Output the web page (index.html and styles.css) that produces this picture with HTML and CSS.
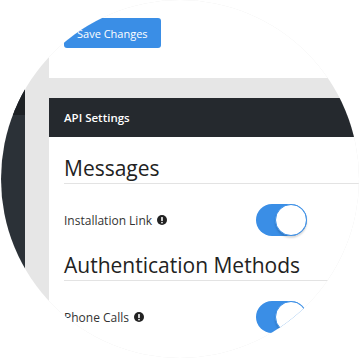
FILE: index.html
```html
<!DOCTYPE html>
<html lang="en">
<head>
  <meta charset="UTF-8">
  <meta name="viewport" content="width=device-width, initial-scale=1.0">
  <title>API Settings</title>
  <link rel="stylesheet" href="styles.css">
</head>
<body>

  <div class="lens">
    <div class="app">
      <aside class="sidebar">
        <div class="sidebar-brand"></div>
      </aside>

      <main class="main">
        <div class="topbar">
          <button class="btn-save">Save Changes</button>
        </div>

        <section class="card">
          <div class="card-header">API Settings</div>
          <div class="card-body">
            <h2 class="section-title">Messages</h2>
            <div class="setting-row">
              <span class="setting-label">Installation Link
                <svg class="info-icon" viewBox="0 0 10 10"><circle cx="5" cy="5" r="5" fill="#222"/><rect x="4.2" y="2" width="1.6" height="4" rx="0.6" fill="#fff"/><circle cx="5" cy="7.6" r="0.85" fill="#fff"/></svg>
              </span>
              <span class="toggle on"><span class="knob"></span></span>
            </div>

            <h2 class="section-title">Authentication Methods</h2>
            <div class="setting-row">
              <span class="setting-label">Phone Calls
                <svg class="info-icon" viewBox="0 0 10 10"><circle cx="5" cy="5" r="5" fill="#222"/><rect x="4.2" y="2" width="1.6" height="4" rx="0.6" fill="#fff"/><circle cx="5" cy="7.6" r="0.85" fill="#fff"/></svg>
              </span>
              <span class="toggle on"><span class="knob"></span></span>
            </div>
          </div>
        </section>
      </main>
    </div>
  </div>

</body>
</html>
```

FILE: styles.css
```css
body {
  margin: 0;
  background-color: #fff;
  font-family: 'Open Sans', sans-serif;
}

.lens {
  width: 359px;
  height: 359px;
  overflow: hidden;
  clip-path: circle(179px at 180px 179px);
}

.app {
  display: flex;
  height: 100%;
}

.sidebar {
  width: 25px;
  background-color: #2b3137;
}

.sidebar-brand {
  height: 115px;
  background-color: #1d2125;
}

.main {
  flex: 1;
  background-color: #e6e6e6;
  padding-left: 24px;
}

.topbar {
  height: 78px;
  background-color: #fff;
  padding: 18px 15px 0;
  box-sizing: border-box;
  margin-bottom: 20px;
}

.btn-save {
  height: 30px;
  padding: 0 13px;
  background-color: #3a8ee6;
  color: #fff;
  border: none;
  border-radius: 3px;
  font-family: 'Open Sans', sans-serif;
  font-size: 11px;
}

.card {
  background-color: #fff;
}

.card-header {
  height: 39px;
  line-height: 39px;
  padding-left: 15px;
  background-color: #25292e;
  color: #fff;
  font-size: 11.5px;
  font-weight: 600;
}

.card-body {
  padding: 19px 0 40px 15px;
}

.section-title {
  margin: 0;
  padding-bottom: 2px;
  font-size: 21px;
  line-height: 25px;
  font-weight: 400;
  color: #222;
  border-bottom: 1px solid #e3e3e3;
}

.setting-row + .section-title {
  margin-top: 17px;
}

.setting-row {
  display: flex;
  align-items: center;
  height: 32px;
  margin-top: 20px;
}

.setting-label {
  width: 192px;
  display: flex;
  align-items: center;
  gap: 5px;
  font-size: 12px;
  color: #333;
}

.info-icon {
  width: 10px;
  height: 10px;
}

.toggle {
  position: relative;
  width: 51px;
  height: 32px;
  border-radius: 16px;
  background-color: #ddd;
}

.toggle.on {
  background-color: #3a8ee6;
}

.knob {
  position: absolute;
  top: 0;
  right: 0;
  width: 32px;
  height: 32px;
  box-sizing: border-box;
  border-radius: 50%;
  background-color: #fff;
  border: 1px solid #3a8ee6;
  box-shadow: 0 2px 2px rgba(0, 0, 0, 0.15);
}
```
